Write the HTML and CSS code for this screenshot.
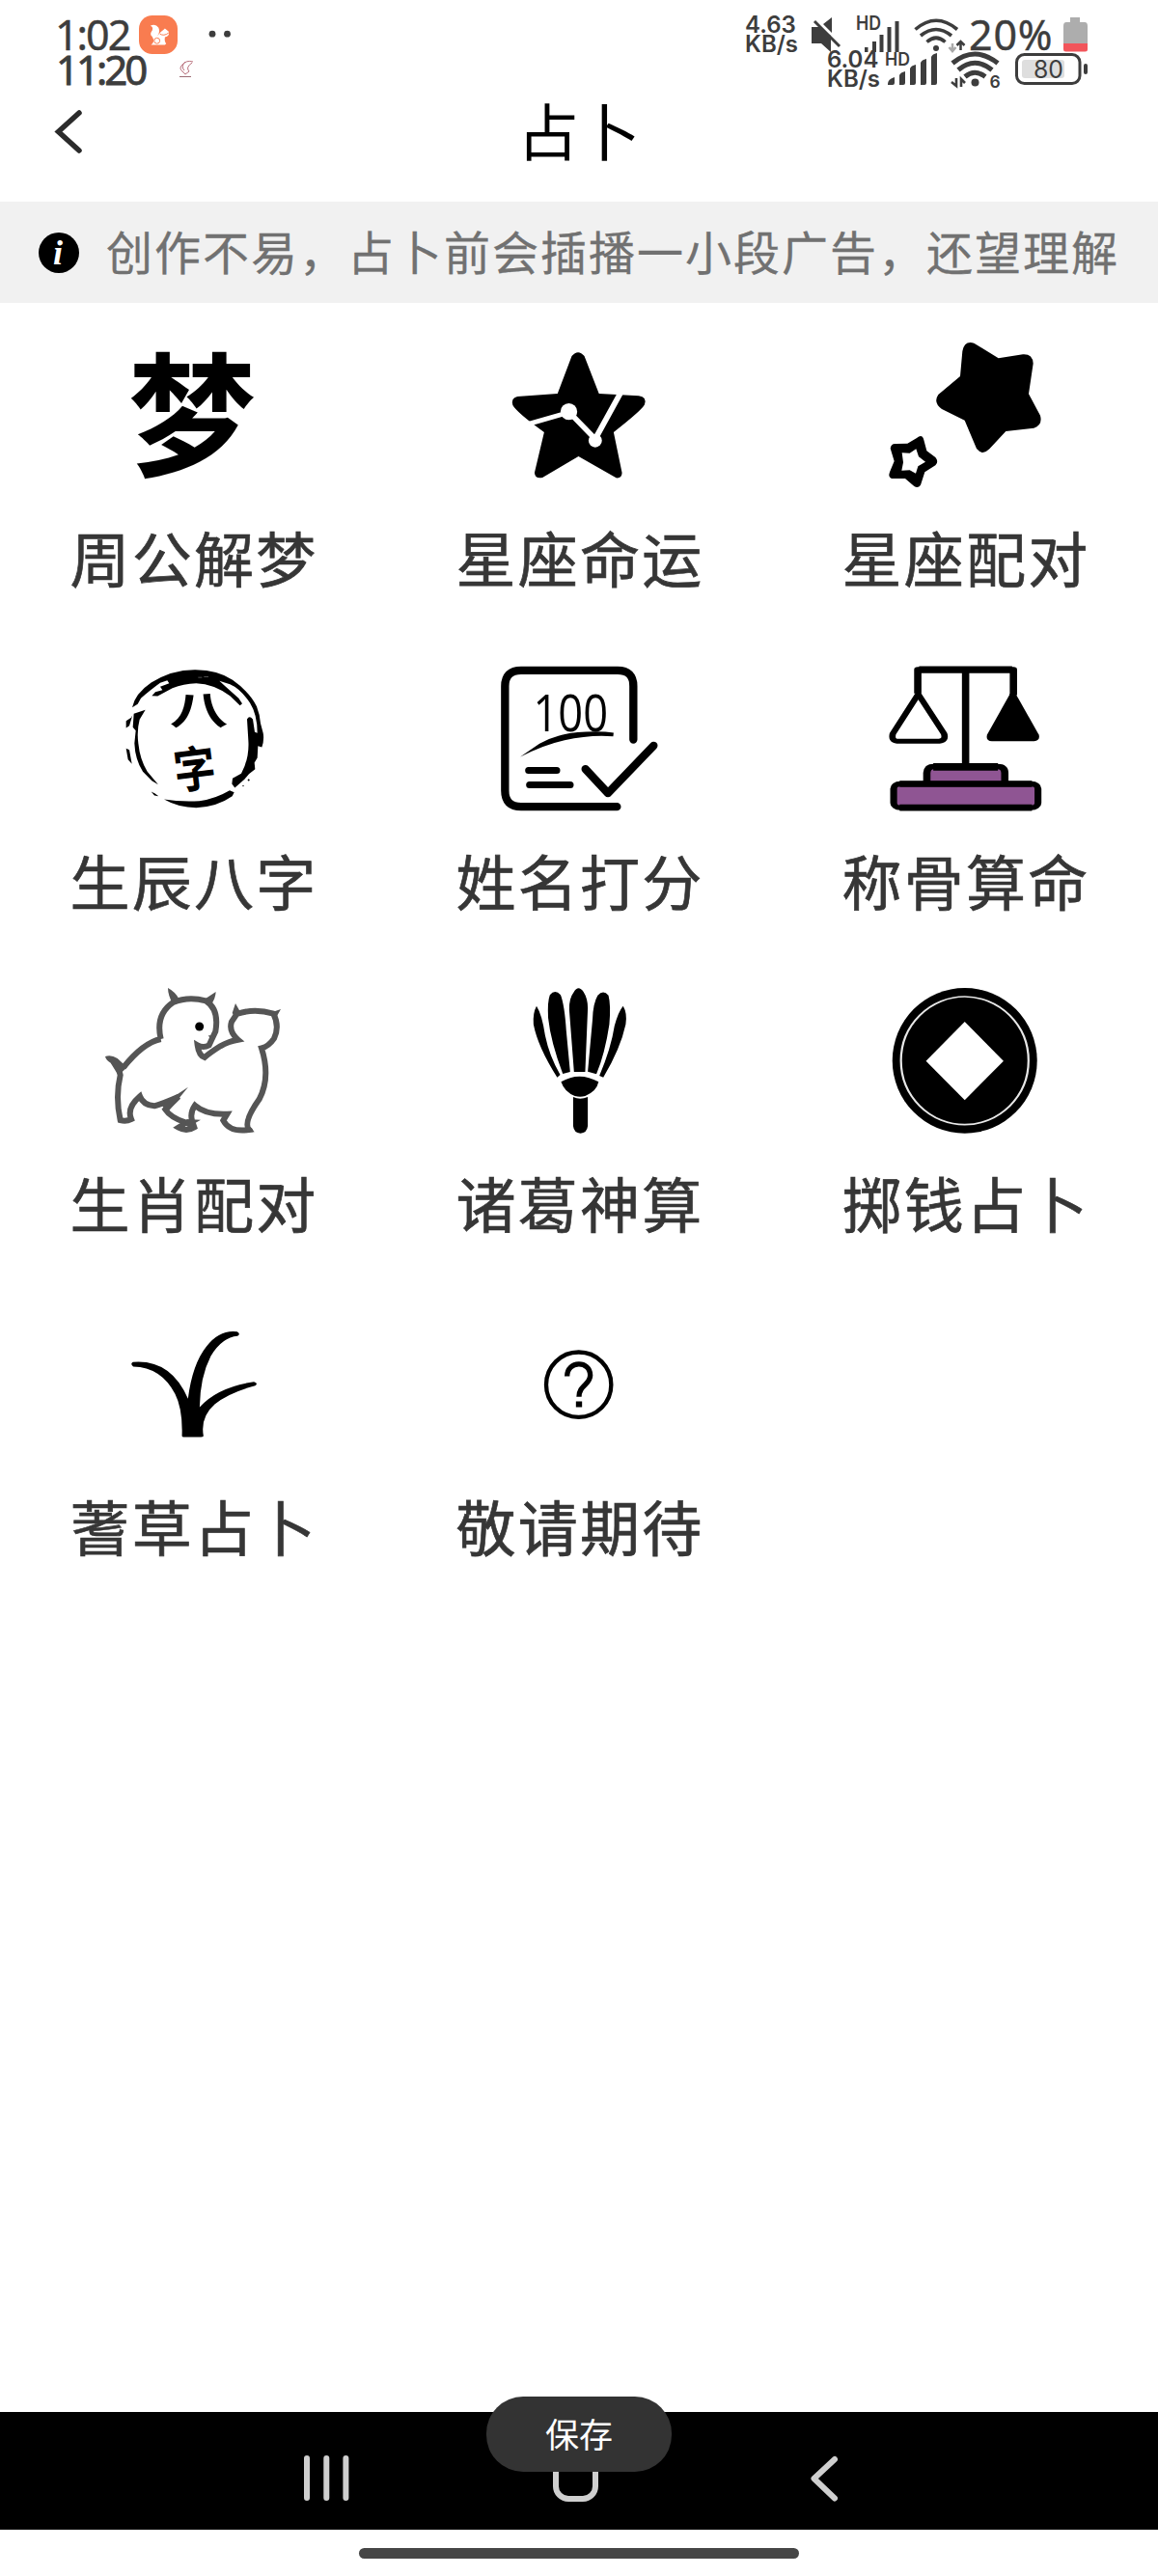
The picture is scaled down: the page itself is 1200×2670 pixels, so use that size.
FILE: index.html
```html
<!DOCTYPE html>
<html lang="zh-CN">
<head>
<meta charset="utf-8">
<title>占卜</title>
<link rel="stylesheet" href="styles.css">
</head>
<body>
<div class="screen">
  <div class="status">
    <div class="status-row">
      <span class="time">1:02</span>
      <svg class="app-badge" viewBox="432 45 122 122"><rect x="432" y="45" width="122" height="122" rx="42" fill="#f97c50"/><path d="M468 78Q484 70 494 84Q500 98 490 110Q500 96 510 90L514 86L526 96Q530 110 514 114Q512 128 518 134L514 138H470Q484 128 474 112Q464 104 474 92Q478 82 468 78Z" fill="#fff"/><circle cx="489" cy="125" r="9" fill="none" stroke="#f97c50" stroke-width="3"/><path d="M498 103Q510 112 526 100" fill="none" stroke="#f97c50" stroke-width="3"/></svg>
      <svg class="dots" viewBox="184 0 60 72"><circle cx="220" cy="35.200" r="3.400"/><circle cx="235.500" cy="35.200" r="3.400"/></svg>
      <span class="spacer"></span>
      <span class="speed">4.63<br>KB/s</span>
      <svg class="signals" viewBox="833 0 171 72">
        <path d="M841 28h8l12 9v17l-10-9h-10zM853 25l9-7v16z"/>
        <path d="M844 22l26 26" stroke="#3d3d3d" stroke-width="3" fill="none"/>
        <text x="887" y="31" font-size="20" textLength="26" lengthAdjust="spacingAndGlyphs">HD</text>
        <path d="M896 49h3.500v5H896zM904 43h4v11h-4zM911.500 36h4v18h-4zM919.500 28h4v26h-4zM927.500 22h4v32h-4z"/>
        <g fill="none" stroke="#3d3d3d" stroke-width="3.600"><path d="M948.500 30.500Q970 12 992 30.500M954 37Q970 24 986 37M960.500 43.500Q970 35 979.500 43.500"/></g>
        <circle cx="970" cy="50" r="3"/>
        <path d="M987 45v8m-3.500-4l3.500 4 3.500-4" fill="none" stroke="#aaa" stroke-width="2.500"/><path d="M995.500 52v-9m-4 4l4-4 4 4" fill="none" stroke="#3d3d3d" stroke-width="2.500"/>
      </svg>
      <span class="percent">20%</span>
      <svg class="cell-battery" viewBox="1100 0 28 72"><path d="M1109 18h10v5h5q3 0 3 4v18h-25V27q0-4 3-4h4z" fill="#adadad"/><path d="M1102 45h25v6q0 2.500-2.500 2.500h-20q-2.500 0-2.500-2.500z" fill="#f2555b"/></svg>
    </div>
    <div class="status-row second">
      <span class="time heavy">11:20</span>
      <svg class="scribble" viewBox="183 36 22 72"><path d="M200 64q-7-2-11 3-4 4 0 7l3 3 4-3q-4-4 3-9m-7-1q-5 5-1 9" fill="none" stroke="#b9707c" stroke-width="1"/><path d="M186 79.500h12" stroke="#9c6b74" stroke-width="1"/></svg>
      <span class="spacer"></span>
      <span class="speed">6.04<br>KB/s</span>
      <svg class="signals-low" viewBox="914 36 126 72">
        <text x="917" y="67.500" font-size="18.500" textLength="26" lengthAdjust="spacingAndGlyphs">HD</text>
        <path d="M920 87q0-5 7-7v6q0 2-2 2h-5zM932 78q1-3 6-4v12q0 2-2 2h-4zM943 71q1-3 6-4v19q0 2-2 2h-4zM954 65q1-3 6-4v25q0 2-2 2h-4zM965 59q1-3 6-4v31q0 2-2 2h-4z"/>
        <g fill="none" stroke="#3d3d3d" stroke-width="5"><path d="M987 65.500Q1010 46.500 1034 65.500M993 72.500Q1010 58 1028 72.500M1000 79.500Q1010 71 1021 79.500"/></g>
        <circle cx="1010.500" cy="85.500" r="4"/>
        <path d="M991 81v8l-5-4M996 90v-8l4 4" fill="none" stroke="#3d3d3d" stroke-width="2.600"/>
        <text x="1025.500" y="91" font-size="17.500">6</text>
      </svg>
      <svg class="pill-battery" viewBox="1050 36 78 72"><rect x="1053.500" y="56.500" width="65.500" height="30" rx="8" fill="none" stroke="#3d3d3d" stroke-width="3"/><rect x="1059" y="62" width="44" height="19" rx="3" fill="#dedede"/><rect x="1123" y="66" width="4" height="11" rx="2"/><text x="1071" y="80.500" font-size="25" textLength="31" lengthAdjust="spacingAndGlyphs">80</text></svg>
    </div>
  </div>

  <header class="header">
    <svg class="back" viewBox="56 112 32 50"><path d="M82 117L60.500 136.500L82 156"/></svg>
    <h1>占卜</h1>
  </header>

  <div class="notice">
    <svg class="info" viewBox="0 0 42 42"><circle cx="21" cy="21" r="21"/><text x="15" y="33" font-size="36">i</text></svg>
    <span>创作不易，占卜前会插播一小段广告，还望理解</span>
  </div>

  <main class="grid">
    <div class="cell">
      <svg class="icon" viewBox="103.800 45 438.100 450" preserveAspectRatio="none"><text class="dream" x="168" y="430" font-size="415" textLength="305" lengthAdjust="spacingAndGlyphs">梦</text></svg>
      <span class="label">周公解梦</span>
    </div>
    <div class="cell">
      <svg class="icon" viewBox="1026.200 45 438.100 450" preserveAspectRatio="none"><path d="M1228 87Q1243 64 1258 87L1293 204L1388 211Q1408 214 1402 238Q1396 255 1328 324L1348 450Q1348 468 1334 466L1244 399L1158 465Q1140 470 1139 450L1162 324Q1096 262 1087 240Q1082 218 1098 213L1194 204Z"/><path d="M1128 297L1222 262L1284 345L1344 203" fill="none" stroke="#fff" stroke-width="14"/><ellipse cx="1221" cy="260" rx="20" ry="26" fill="#fff"/><ellipse cx="1284" cy="350" rx="16" ry="21" fill="#fff"/></svg>
      <span class="label">星座命运</span>
    </div>
    <div class="cell">
      <svg class="icon" viewBox="195 45 570 450" preserveAspectRatio="none"><path d="M472 72Q478 38 508 47L584 94L660 82Q690 80 692 110L678 205L714 272Q722 302 694 311L607 321L556 376Q534 398 516 375L479 287L408 252Q380 232 397 207L465 150Z"/><path d="M330 342Q347 328 352 348L361 382L388 402Q400 416 388 427L355 448L342 488Q334 500 322 492L294 468L252 468Q240 464 246 448L260 414L248 374Q250 358 266 360L301 359Z"/><path d="M328 376L336 400L357 416L334 430L327 452L308 442L283 443L288 418L284 388L308 389Z" fill="#fff"/></svg>
      <span class="label">星座配对</span>
    </div>
    <div class="cell">
      <svg class="icon" viewBox="135 58.500 570 450" preserveAspectRatio="none">
        <path d="M231 188Q240 145 290 111Q355 70 428 71Q500 72 543 103Q596 140 618 185Q628 210 630 238L638 268Q642 290 634 312L622 308L620 345L611 360L613 380L594 395L580 412L550 438L541 426L543 409L570 394Q596 345 592 290L588 225Q595 212 606 225L612 265L620 268Q620 210 597 174Q568 130 535 116L502 106L520 122L562 160L573 176L566 182L535 152Q485 115 430 113Q390 115 356 128L310 153L292 152L303 140L325 134L318 124L346 113L340 104L318 112Q280 140 258 160L248 178Z"/>
        <path d="M236 208L272 196L254 226Q245 260 250 300Q255 350 278 388L312 428L292 416L264 388Q240 350 238 300L242 260L233 250Z"/>
        <path d="M212 230L228 220L232 212L222 245L212 252ZM212 316L222 320L230 364L218 350ZM290 450L302 456L313 464L300 462ZM330 474Q380 482 440 479Q490 472 534 446L548 452L542 464Q495 497 430 500Q375 500 330 474Z"/>
        <circle cx="593" cy="414" r="3"/><circle cx="576" cy="432" r="2"/><path d="M436 95h12m6-2h14" stroke="#777" stroke-width="2"/>
        <text class="brush" x="347" y="241" font-size="122" textLength="182" lengthAdjust="spacingAndGlyphs">八</text>
        <text class="brush" x="360" y="436" font-size="152" textLength="130" lengthAdjust="spacingAndGlyphs" transform="rotate(-7 425 380)">字</text>
      </svg>
      <span class="label">生辰八字</span>
    </div>
    <div class="cell">
      <svg class="icon" viewBox="100.800 58.500 425.600 450" preserveAspectRatio="none">
        <g transform="scale(.74667 1)" fill="none" stroke="#000" stroke-width="25" stroke-linecap="round" stroke-linejoin="round"><path d="M589 288V122Q589 73 540 73H240Q190 73 190 122V447Q190 497 240 497H538"/><path d="M263 384H351M266 429H393" stroke-width="21"/><path d="M440 380L510 455L652 307" stroke-width="25"/></g>
        <text class="score" x="207" y="263" font-size="159" textLength="174" lengthAdjust="spacingAndGlyphs">100</text>
        <path d="M177 342L222 301Q270 265 330 264Q370 262 394 267L393 278Q340 272 280 290Q230 305 177 342Z"/>
      </svg>
      <span class="label">姓名打分</span>
    </div>
    <div class="cell">
      <svg class="icon" viewBox="996.800 58.500 425.600 450" preserveAspectRatio="none">
        <path d="M1100 145V71H1322V150M1211 71V370" fill="none" stroke="#000" stroke-width="17" stroke-linejoin="round"/><path d="M1103 71H1319" stroke="#000" stroke-width="22"/>
        <path d="M1101 147L1042 270Q1038 292 1052 293H1150Q1166 291 1161 270Z" fill="#fff" stroke="#000" stroke-width="15" stroke-linejoin="round"/>
        <path d="M1314 146Q1322 138 1329 150L1381 273Q1385 291 1370 293H1272Q1257 292 1261 273Z"/>
        <path d="M1121 425V392Q1122 372 1137 372H1285Q1302 372 1302 392V425" fill="#8f5593" stroke="#000" stroke-width="17"/><path d="M1136 373H1286" stroke="#000" stroke-width="23"/>
        <rect x="1044" y="426" width="335" height="74" rx="15" fill="#8f5593" stroke="#000" stroke-width="16"/><path d="M1058 426H1365M1058 500H1365" stroke="#000" stroke-width="20"/>
      </svg>
      <span class="label">称骨算命</span>
    </div>
    <div class="cell">
      <svg class="icon" viewBox="135 72 570 450" preserveAspectRatio="none">
        <g fill="none" stroke="#555" stroke-width="18" stroke-linejoin="miter">
          <path d="M320 231Q302 155 358 117Q405 97 460 112Q502 138 490 207L477 235L470 250Q452 260 434 250Q438 282 456 288Q475 272 505 253Q530 238 560 233Q530 207 540 177L556 153Q610 134 670 152Q690 192 672 229Q655 254 633 259Q662 350 626 418Q575 490 594 513Q535 522 514 484L526 464Q460 467 426 437Q410 460 417 484L424 505Q400 520 375 506L398 491Q350 475 334 450L375 410Q330 430 300 439Q265 436 255 409Q213 445 228 480Q212 488 194 483Q178 410 194 343Q188 310 170 298"/>
          <path d="M320 231Q265 242 203 320"/>
        </g>
        <path d="M342 72Q365 84 377 107L358 124Q342 95 342 72ZM491 84L458 106L477 123Q490 104 491 84ZM552 120L566 145L553 166L542 150ZM693 138L658 150L676 168ZM147 285Q165 278 185 291L215 319L188 344L164 305Q150 298 147 285ZM405 380L322 435L340 460ZM400 480L444 482L423 494L422 512L397 500ZM593 500Q610 511 606 520L582 519Z" fill="#555"/>
        <path d="M468 219L488 222L476 238Z" fill="#555"/><circle cx="440" cy="192" r="13.500"/>
      </svg>
      <span class="label">生肖配对</span>
    </div>
    <div class="cell">
      <svg class="icon" viewBox="100.800 72 425.600 450" preserveAspectRatio="none"><path d="M215 128Q228 155 235 220Q245 285 270 342L263 350Q218 255 208 185Q206 150 215 128ZM246 94Q258 74 271 94Q280 125 284 205L293 333L276 339Q248 240 242 165Q240 115 246 94ZM302 84Q312 62 324 84Q334 105 334 135L328 333H302L291 140Q290 105 302 84ZM357 95Q370 76 382 95Q388 125 384 185Q374 275 354 340L334 332L345 170Q346 120 357 95ZM416 128Q426 150 422 185Q410 260 370 350L361 345Q388 260 396 190Q405 145 416 128ZM272 364Q314 330 359 364Q355 393 328 408Q316 413 304 408Q280 396 272 364ZM300 411Q316 422 334 411V501Q332 523 317 524Q302 523 300 501Z"/></svg>
      <span class="label">诸葛神算</span>
    </div>
    <div class="cell">
      <svg class="icon" viewBox="996.800 72 425.600 450" preserveAspectRatio="none"><ellipse cx="1209" cy="298" rx="168" ry="226"/><ellipse cx="1209" cy="298" rx="148" ry="199" fill="none" stroke="#e8e8e8" stroke-width="5"/><path d="M1209 177L1299 299L1209 421L1119 299Z" fill="#fff"/></svg>
      <span class="label">掷钱占卜</span>
    </div>
    <div class="cell">
      <svg class="icon" viewBox="100.800 25.500 425.600 450" preserveAspectRatio="none"><path d="M174 184Q262 174 302 298Q312 190 345 135Q375 82 416 89Q425 96 417 103Q382 106 355 165Q330 230 329 324Q370 262 455 245Q466 249 458 257Q395 280 364 315Q330 355 338 414Q336 417 332 417H292Q288 417 288 413Q290 330 272 283Q240 200 175 198Q167 190 174 184Z"/></svg>
      <span class="label">蓍草占卜</span>
    </div>
    <div class="cell">
      <svg class="icon" viewBox="996.800 25.500 425.600 450" preserveAspectRatio="none"><g transform="scale(.74667 1)" fill="none" stroke="#000"><circle cx="1619" cy="254" r="101" stroke-width="13"/><path d="M1583 228C1583 178 1655 178 1655 225C1655 255 1620 255 1620 292" stroke-width="16"/><path d="M1620 306V324" stroke-width="19"/></g></svg>
      <span class="label">敬请期待</span>
    </div>
  </main>

  <nav class="navbar">
    <svg class="nav-icons" viewBox="0 2500 1200 122"><g fill="none" stroke="#cfcfcf" stroke-width="6" stroke-linecap="round" stroke-linejoin="round"><path d="M318 2548V2589M338.300 2548V2589M358.400 2548V2589"/><rect x="576" y="2547" width="41" height="43" rx="13"/><path d="M865 2549L843.500 2569L865 2589.500"/></g></svg>
    <button class="save">保存</button>
  </nav>
  <div class="gesture"><span></span></div>
</div>
</body>
</html>
```
FILE: styles.css
```css
* { box-sizing: border-box; }
body {
  margin: 0;
  background: #fff;
  font-family: "Noto Sans CJK SC", sans-serif;
}
svg { display: block; flex: none; overflow: visible; }
.screen {
  width: 1200px;
  height: 2670px;
  display: flex;
  flex-direction: column;
  overflow: hidden;
}

/* status bar */
.status { height: 64px; flex: none; color: #3d3d3d; }
.status svg { fill: #3d3d3d; }
.status svg text { font-family: Inter, sans-serif; font-weight: 600; }
.status-row { display: flex; align-items: center; height: 72px; padding: 0 72px 0 57px; }
.status-row.second { margin-top: -36px; }
.spacer { flex: 1; }
.time { width: 87px; font-family: "Noto Sans", sans-serif; font-size: 43px; line-height: 36px; letter-spacing: -2px; white-space: nowrap; -webkit-text-stroke: 0.4px #3d3d3d; }
.time.heavy { width: 126px; padding-left: 1px; font-size: 42px; letter-spacing: -3px; -webkit-text-stroke-width: 0.8px; }
.app-badge { width: 40px; height: 40px; }
.dots { width: 60px; height: 72px; }
.speed { width: 62px; padding-left: 1px; font-family: Inter, sans-serif; font-weight: 600; font-size: 24px; line-height: 20px; }
.second .speed { width: 58px; }
.signals { width: 171px; height: 72px; }
.percent { width: 96px; font-family: "Noto Sans", sans-serif; font-size: 43px; line-height: 36px; letter-spacing: 0.800px; -webkit-text-stroke: 0.4px #3d3d3d; }
.cell-battery { width: 28px; height: 72px; }
.scribble { width: 22px; height: 72px; }
.signals-low { width: 126px; height: 72px; margin-right: 10px; }
.pill-battery { width: 78px; height: 72px; }
.status .pill-battery text { font-weight: 400; }

/* title bar */
.header {
  height: 145px;
  flex: none;
  display: grid;
  grid-template-columns: 120px 1fr 120px;
  align-items: center;
}
.back { width: 32px; height: 50px; margin-left: 56px; }
.back path { fill: none; stroke: #2b2b2b; stroke-width: 5.5px; stroke-linecap: round; }
h1 { margin: 0; padding-bottom: 8px; text-align: center; font-size: 64px; font-weight: 400; line-height: 80px; color: #000; }

/* notice strip */
.notice {
  height: 105px;
  flex: none;
  display: flex;
  align-items: center;
  gap: 28px;
  padding-left: 40px;
  background: #f1f1f1;
  color: #717171;
  font-size: 48px;
  letter-spacing: 2px;
  white-space: nowrap;
}
.notice span { padding-bottom: 6px; -webkit-text-stroke: 0.3px #717171; }
.info { width: 42px; height: 42px; }
.info text { fill: #fff; font-family: "Liberation Serif", serif; font-weight: 700; font-style: italic; }

/* services */
.grid {
  flex: 1;
  display: grid;
  grid-template-columns: repeat(3, 400px);
  grid-auto-rows: 334.500px;
  align-content: start;
  padding-top: 41px;
}
.cell { display: flex; flex-direction: column; align-items: center; gap: 40px; }
.icon { width: 190px; height: 150px; fill: #000; }
.label { font-size: 62px; line-height: 64px; letter-spacing: 2.200px; margin-right: -2px; color: #363636; white-space: nowrap; -webkit-text-stroke: 0.7px #363636; }
.dream { font-weight: 700; }
.brush { font-weight: 700; }
.score { font-family: "Open Sans", sans-serif; }

/* bottom area */
.navbar { position: relative; height: 122px; flex: none; background: #000; }
.nav-icons { width: 1200px; height: 122px; }
.save {
  position: absolute;
  left: 504px;
  top: -16px;
  width: 192px;
  height: 78px;
  padding: 0;
  border: 0;
  border-radius: 38px;
  background: #333;
  color: #fff;
  font: 400 35px/74px "Noto Sans CJK SC", sans-serif;
  padding-bottom: 3px;
}
.gesture { height: 48px; flex: none; display: flex; justify-content: center; padding-top: 19px; }
.gesture span { width: 456px; height: 11px; border-radius: 6px; background: #464646; }
```
